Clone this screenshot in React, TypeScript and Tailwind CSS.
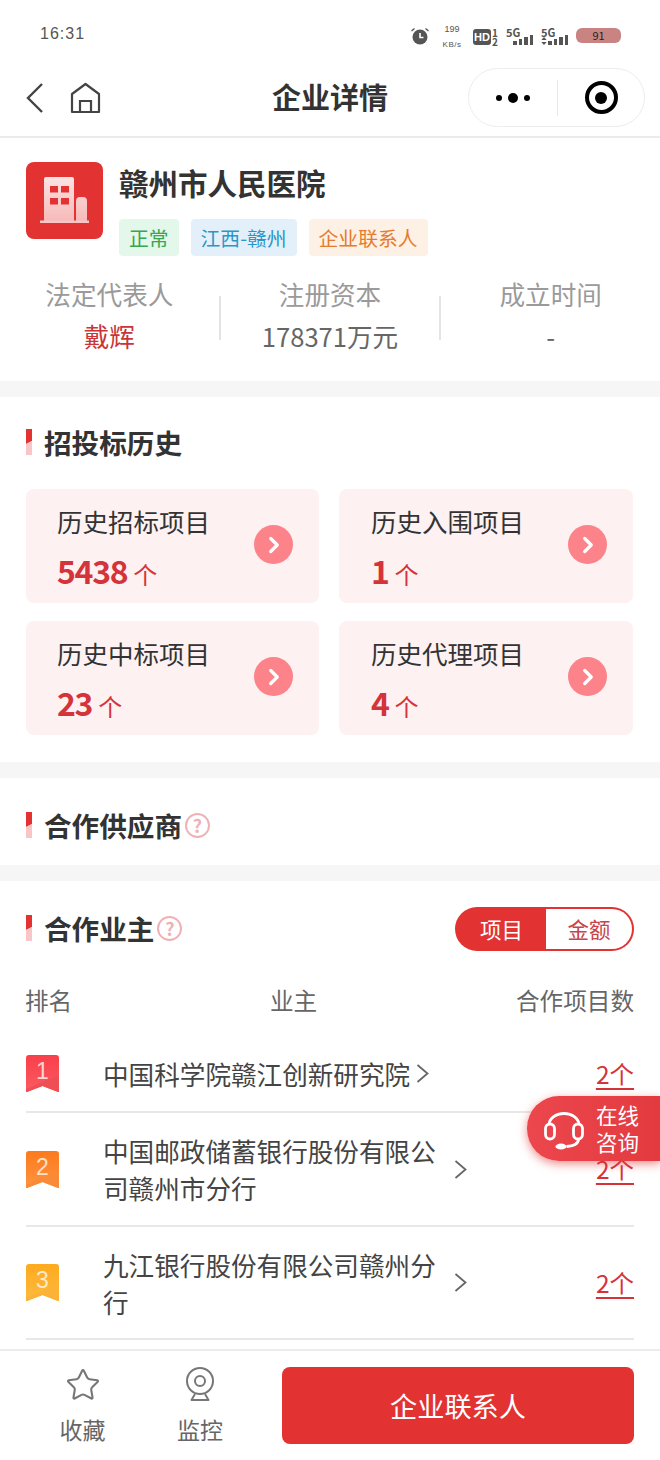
import { ChevronRight, Star } from 'lucide-react';

const FONT = "font-['Noto_Sans_CJK_SC','Noto_Sans',sans-serif]";

function Alarm() {
  return (
    <svg width="20" height="20" viewBox="0 0 20 20" className="text-[#555] mt-[2px]">
      <circle cx="10" cy="11" r="7.500" fill="currentColor" />
      <path d="M10 7v4.500h3.500" fill="none" stroke="#fff" strokeWidth="1.600" />
      <path d="M1.500 5 4.500 2.500M18.500 5l-3-2.500" stroke="currentColor" strokeWidth="1.400" />
    </svg>
  );
}

function Signal({ arrows }: { arrows?: boolean }) {
  return (
    <div className="relative w-[27px] h-[17px]">
      <span className="absolute left-0 -top-[3px] text-[11px] leading-[14px] font-semibold text-[#555]">5G</span>
      {arrows && (
        <svg width="6" height="8" viewBox="0 0 6 9" className="absolute left-0 top-[9px] text-[#555]">
          <path d="M3 0 6 3.500H0zM3 9 0 5.500h6z" fill="currentColor" />
        </svg>
      )}
      <div className="absolute right-0 bottom-0 flex items-end gap-[2px]">
        <div className="w-[3.500px] h-[4px] bg-[#555]" />
        <div className="w-[3.500px] h-[6px] bg-[#555]" />
        <div className="w-[3.500px] h-[8px] bg-[#555]" />
        <div className="w-[3.500px] h-[10px] bg-[#555]" />
      </div>
    </div>
  );
}

function StatusBar() {
  return (
    <div className="h-[68px] flex justify-between pl-[40px] pr-[39px] pt-[24px]">
      <span className="text-[16px] leading-[20px] tracking-[1px] text-[#555] font-['Liberation_Sans',sans-serif]">16:31</span>
      <div className="flex items-start h-[26px]">
        <Alarm />
        <div className="flex flex-col items-center w-[24px] ml-[10px] -mt-[1.500px] text-[#555] font-['Liberation_Sans',sans-serif]">
          <span className="text-[9px] leading-[12px]">199</span>
          <span className="text-[8px] leading-[12px] mt-[4px] tracking-[0.500px]">KB/s</span>
        </div>
        <div className="flex items-center gap-[1px] ml-[9px] mt-[4px]">
          <div className="w-[18px] h-[16px] bg-[#555] rounded-[3px] text-white text-[11px] leading-[16px] font-bold text-center font-['Liberation_Sans',sans-serif]">HD</div>
          <div className="flex flex-col w-[7px] text-[10px] leading-[9px] font-semibold text-[#555]">
            <span>1</span>
            <span>2</span>
          </div>
        </div>
        <div className="flex gap-[8px] ml-[7px] mt-[4px]">
          <Signal />
          <Signal arrows />
        </div>
        <div className="w-[45px] h-[15px] ml-[8px] mt-[4px] rounded-[6px] bg-[#c98482] text-center text-[11px] leading-[15px] text-[#222]">91</div>
      </div>
    </div>
  );
}

function NavBar() {
  return (
    <div className="h-[70px] flex items-start border-b-2 border-[#ebebeb] pl-[24px] pr-[15px] relative">
      <svg width="20" height="32" viewBox="0 0 20 32" fill="none" stroke="#444" strokeWidth="2.400" className="mt-[14px]">
        <path d="M18 2 4 16l14 14" />
      </svg>
      <svg width="32" height="34" viewBox="0 0 32 34" fill="none" stroke="#444" strokeWidth="2.200" className="ml-[26px] mt-[14px]">
        <path d="M2 30V12L15.500 2 29 12v18z" strokeLinejoin="round" />
        <path d="M10 30V19h11v11" />
      </svg>
      <span className="absolute left-0 right-0 top-[8px] text-center text-[29px] leading-[40px] font-bold text-[#333] pointer-events-none">企业详情</span>
      <div className="ml-auto w-[177px] h-[59px] rounded-full border border-[#ededed] flex items-center">
        <div className="w-[88px] flex items-center justify-center gap-[6px]">
          <div className="w-[6px] h-[6px] rounded-full bg-black" />
          <div className="w-[10px] h-[10px] rounded-full bg-black" />
          <div className="w-[6px] h-[6px] rounded-full bg-black" />
        </div>
        <div className="w-px h-[36px] bg-[#e8e8e8]" />
        <div className="flex-1 flex justify-center">
          <div className="w-[33px] h-[33px] rounded-full border-[4px] border-black flex items-center justify-center">
            <div className="w-[12px] h-[12px] rounded-full bg-black" />
          </div>
        </div>
      </div>
    </div>
  );
}

function Tag({ text, className }: { text: string; className: string }) {
  return (
    <div className={`h-[37px] px-[10px] rounded-[4px] text-[19.800px] leading-[37px] ${className}`}>{text}</div>
  );
}

function Stat({ label, value, className }: { label: string; value: string; className: string }) {
  return (
    <div className="flex-1 flex flex-col items-center">
      <span className="text-[25.600px] leading-[36px] text-[#9a9a9a]">{label}</span>
      <span className={`text-[25.600px] leading-[36px] mt-[6px] ${className}`}>{value}</span>
    </div>
  );
}

function Company() {
  return (
    <div className="h-[243px] pt-[24px] px-[26px]">
      <div className="flex">
        <div className="w-[77px] h-[77px] rounded-[8px] bg-[#e23232] flex items-center justify-center">
          <svg width="50" height="48" viewBox="0 0 50 48">
            <defs>
              <linearGradient id="bld" x1="0" y1="0" x2="0" y2="1">
                <stop offset="0" stopColor="#fbe3e3" />
                <stop offset="1" stopColor="#f8b9b9" />
              </linearGradient>
            </defs>
            <path d="M4 2a2 2 0 0 1 2-2h26a2 2 0 0 1 2 2v42H4zM36 24a4 4 0 0 1 4-4h3a4 4 0 0 1 4 4v20H36z" fill="url(#bld)" />
            <path d="M0 43.500h49V46H0z" fill="#f8c4c4" />
            <path d="M10 9h8v6.500h-8zM21 9h8v6.500h-8zM10 21h8v6.500h-8zM21 21h8v6.500h-8z" fill="#e23232" />
          </svg>
        </div>
        <div className="ml-[16px]">
          <div className="text-[29.500px] leading-[40px] font-bold text-[#333]">赣州市人民医院</div>
          <div className="flex gap-[12px] mt-[17px]">
            <Tag text="正常" className="bg-[#e3f7ea] text-[#36a651]" />
            <Tag text="江西-赣州" className="bg-[#e3f0fa] text-[#2b97c9]" />
            <Tag text="企业联系人" className="bg-[#fdf0e4] text-[#e67a2e]" />
          </div>
        </div>
      </div>
      <div className="flex items-center mt-[20px] -mx-[26px]">
        <Stat label="法定代表人" value="戴辉" className="text-[#c8363a]" />
        <div className="w-[2px] h-[44px] bg-[#e4e4e4] mt-[5px]" />
        <Stat label="注册资本" value="178371万元" className="text-[#666]" />
        <div className="w-[2px] h-[44px] bg-[#e4e4e4] mt-[5px]" />
        <Stat label="成立时间" value="-" className="text-[#666]" />
      </div>
    </div>
  );
}

function Divider() {
  return <div className="h-[16px] bg-[#f6f6f6]" />;
}

function Heading({ text, help }: { text: string; help?: boolean }) {
  return (
    <div className="flex items-center">
      <svg width="6" height="26" viewBox="0 0 6 26">
        <path d="M0 0h6v12L0 15z" fill="#e23232" />
        <path d="M0 15 6 12v14H0z" fill="#f9c6c8" />
      </svg>
      <span className="ml-[12px] text-[27.600px] leading-[38px] font-bold text-[#333]">{text}</span>
      {help && (
        <div className="ml-[3px] w-[25px] h-[25px] rounded-full border-2 border-[#eeb1b6] text-[#eeb1b6] flex items-center justify-center text-[18px] leading-none font-bold">?</div>
      )}
    </div>
  );
}

function HistoryCard({ title, count }: { title: string; count: string }) {
  return (
    <div className="h-[114px] rounded-[8px] bg-[#fdf1f1] pl-[31px] even:pl-[32px] pr-[26px] pt-[14px] flex items-start justify-between">
      <div>
        <div className="text-[25.500px] leading-[36px] text-[#333]">{title}</div>
        <div className="flex items-baseline mt-[11px] text-[#d5333a]">
          <span className="text-[32px] leading-[40px] font-bold tracking-[-1.300px]">{count}</span>
          <span className="text-[24px] leading-[40px] ml-[6px]">个</span>
        </div>
      </div>
      <div className="w-[39px] h-[39px] mt-[22px] rounded-full bg-[#fb8389] flex items-center justify-center">
        <ChevronRight className="w-[26px] h-[26px] text-white" strokeWidth={3} />
      </div>
    </div>
  );
}

function History() {
  return (
    <div className="h-[365px] pt-[26px] pl-[26px] pr-[27px]">
      <Heading text="招投标历史" />
      <div className="grid grid-cols-[293px_294px] gap-x-[20px] gap-y-[18px] mt-[28px]">
        <HistoryCard title="历史招标项目" count="5438" />
        <HistoryCard title="历史入围项目" count="1" />
        <HistoryCard title="历史中标项目" count="23" />
        <HistoryCard title="历史代理项目" count="4" />
      </div>
    </div>
  );
}

function RankBadge({ rank, from, to, fold, digit }: { rank: number; from: string; to: string; fold: string; digit: string }) {
  const gid = `rank${rank}`;
  return (
    <div className="relative w-[33px] h-[37px] shrink-0">
      <svg width="33" height="37" viewBox="0 0 33 37" className="absolute inset-0">
        <defs>
          <linearGradient id={gid} x1="0" y1="0" x2="0" y2="1">
            <stop offset="0" stopColor={from} />
            <stop offset="1" stopColor={to} />
          </linearGradient>
        </defs>
        <path d="M3 0h27a3 3 0 0 1 3 3v33a1 1 0 0 1-1.500.800L16.500 31 1.500 36.800A1 1 0 0 1 0 36V3a3 3 0 0 1 3-3z" fill={`url(#${gid})`} />
        <path d="M0 34 33 20v16a1 1 0 0 1-1.500.800L16.500 31 1.500 36.800A1 1 0 0 1 0 36z" fill={fold} />
      </svg>
      <span className={`absolute inset-x-0 top-[3px] text-center text-[23px] leading-[26px] font-['Liberation_Sans',sans-serif] ${digit}`}>{rank}</span>
    </div>
  );
}

function OwnerRow({ badge, name, height, nameClass, chevronClass, last }: { badge: React.ReactNode; name: string; height: string; nameClass: string; chevronClass: string; last?: boolean }) {
  return (
    <div className={`${height} flex items-center ${last ? '' : 'border-b-2 border-[#e8e8e8]'}`}>
      {badge}
      <span className={`ml-[44px] text-[25.600px] leading-[37px] text-[#444] ${nameClass}`}>{name}</span>
      <svg width="13" height="19" viewBox="0 0 13 19" fill="none" stroke="#666" strokeWidth="1.800" className={chevronClass}>
        <path d="M1.500 1 11.500 9.500 1.500 18" />
      </svg>
      <span className="ml-auto text-[24.500px] leading-[30px] text-[#d5333a] underline underline-offset-[4px] decoration-2">2个</span>
    </div>
  );
}

function Owners() {
  return (
    <div className="pt-[26px] px-[26px]">
      <div className="flex items-start justify-between">
        <div className="mt-[2px]">
          <Heading text="合作业主" help />
        </div>
        <div className="flex w-[179px] h-[44px] rounded-full bg-[#e23232] p-[2px]">
          <div className="w-[89px] text-white text-center text-[21.500px] leading-[40px]">项目</div>
          <div className="flex-1 rounded-r-full bg-white text-[#c8444a] text-center text-[21.500px] leading-[40px]">金额</div>
        </div>
      </div>
      <div className="flex items-center h-[34px] mt-[33px] -ml-[1px] text-[23.600px] text-[#666]">
        <span className="w-[245px]">排名</span>
        <span className="w-[244px]">业主</span>
        <span className="ml-auto">合作项目数</span>
      </div>
      <div className="mt-[18px]">
        <OwnerRow height="h-[77px]" nameClass="" chevronClass="ml-[6px]" name="中国科学院赣江创新研究院" badge={<RankBadge rank={1} from="#f8404a" to="#fb5a62" fold="#f04e55" digit="text-[#ffd5d5]" />} />
        <OwnerRow height="h-[114px]" nameClass="w-[334px]" chevronClass="ml-[17px]" name="中国邮政储蓄银行股份有限公司赣州市分行" badge={<RankBadge rank={2} from="#fd7a1e" to="#fd9440" fold="#f98a38" digit="text-[#ffe0c4]" />} />
        <OwnerRow height="h-[113px]" nameClass="w-[334px]" chevronClass="ml-[17px]" name="九江银行股份有限公司赣州分行" badge={<RankBadge rank={3} from="#fdaa1e" to="#fdba40" fold="#fbb236" digit="text-[#ffeac4]" />} />
      </div>
    </div>
  );
}

function FloatConsult() {
  return (
    <div className="absolute right-0 top-[1096px] w-[133px] h-[65px] rounded-l-[32px] bg-gradient-to-r from-[#ec474d] to-[#e23a3f] shadow-[0_3px_10px_rgba(226,50,50,0.55)] flex items-center pl-[17px]">
      <svg width="40" height="38" viewBox="0 0 40 38" fill="none" stroke="#fff" strokeWidth="2.800" className="shrink-0 mt-[5px]">
        <path d="M5 13a15 11.500 0 0 1 30 0" />
        <rect x="1.500" y="12" width="9" height="15" rx="4.500" />
        <rect x="29.500" y="12" width="9" height="15" rx="4.500" />
        <path d="M34.500 27c0 5-5 7-12 7.500" />
        <ellipse cx="17" cy="34.500" rx="5.500" ry="3" fill="#fff" stroke="none" />
      </svg>
      <div className="ml-[12px] -mt-[1px] text-white text-[21.500px] leading-[27px]">
        <div>在线</div>
        <div>咨询</div>
      </div>
    </div>
  );
}

function BottomBar() {
  return (
    <div className="absolute left-0 right-0 bottom-0 h-[111px] bg-white border-t-2 border-[#ececec] flex items-start">
      <div className="w-[165px] flex flex-col items-center pt-[16px]">
        <Star className="w-[36px] h-[36px] text-[#777]" strokeWidth={1.400} />
        <span className="text-[23px] leading-[32px] text-[#666] mt-[10px]">收藏</span>
      </div>
      <div className="w-[70px] flex flex-col items-center pt-[15px]">
        <svg width="32" height="36" viewBox="0 0 32 36" fill="none" stroke="#777" strokeWidth="2">
          <circle cx="16" cy="15" r="13" />
          <circle cx="16" cy="15" r="5" />
          <path d="M11 28 7.500 34h17L21 28" strokeLinejoin="round" />
        </svg>
        <span className="text-[23px] leading-[32px] text-[#666] mt-[11px]">监控</span>
      </div>
      <div className="ml-auto mr-[26px] mt-[16px] w-[352px] h-[77px] rounded-[8px] bg-[#e23232] text-white text-center text-[27.200px] leading-[77px]">企业联系人</div>
    </div>
  );
}

export default function App() {
  return (
    <div className={`relative w-[660px] h-[1460px] overflow-hidden bg-white ${FONT}`}>
      <StatusBar />
      <NavBar />
      <Company />
      <Divider />
      <History />
      <Divider />
      <div className="h-[87px] pt-[28px] pl-[26px]">
        <Heading text="合作供应商" help />
      </div>
      <Divider />
      <Owners />
      <FloatConsult />
      <BottomBar />
    </div>
  );
}
